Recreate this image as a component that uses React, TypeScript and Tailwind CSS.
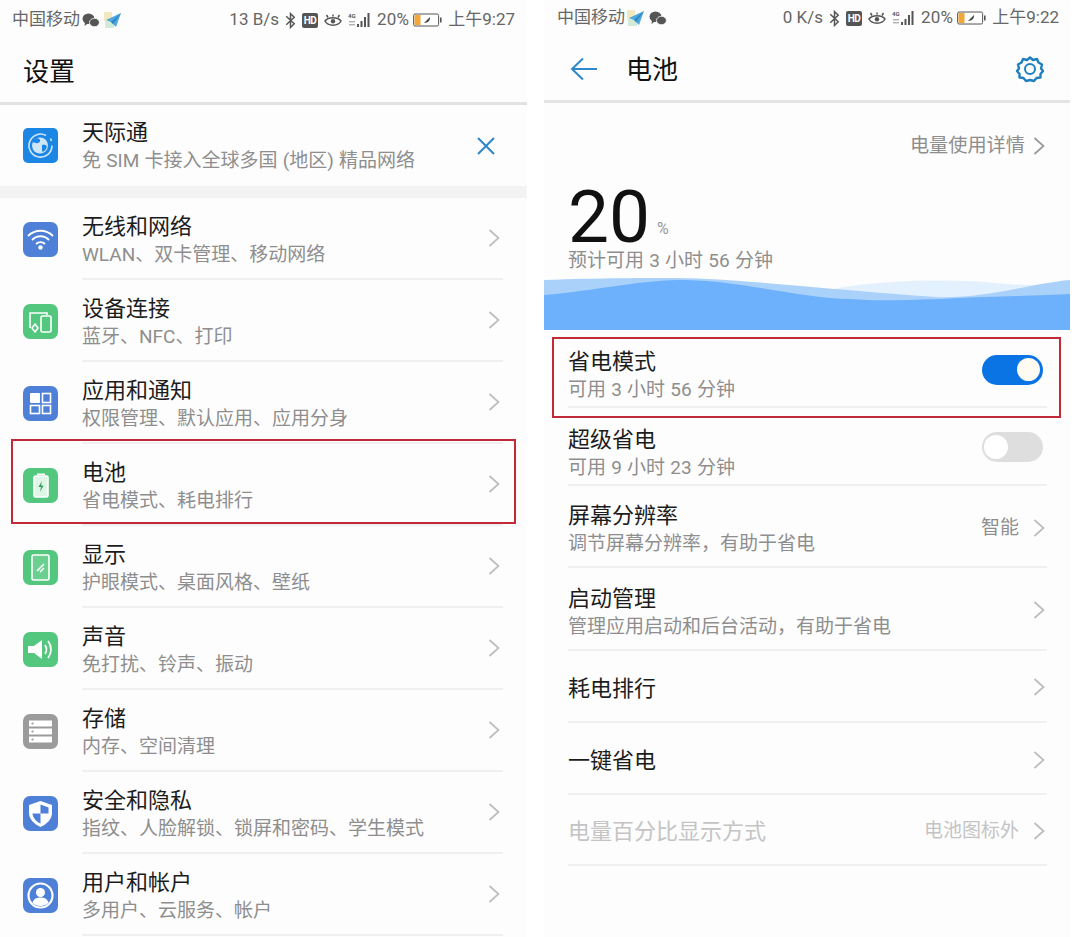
import React from "react";

const font = { fontFamily: '"Roboto","Noto Sans CJK SC",sans-serif' };

function Chevron({ className = "" }: { className?: string }) {
  return (
    <svg viewBox="0 0 12 24" className={`w-[12px] h-[24px] ${className}`} fill="none" stroke="currentColor" strokeWidth="1.7">
      <path d="M1.5 4 L10.5 12 L1.5 20" />
    </svg>
  );
}

function Wechat() {
  return (
    <svg viewBox="0 0 18 15" className="w-[18px] h-[15px]" fill="#555">
      <ellipse cx="6.5" cy="5.8" rx="6" ry="5.2" />
      <path d="M3 9.5 L2.5 13 L6.5 10 Z" />
      <ellipse cx="12.4" cy="9.5" rx="5" ry="4.2" stroke="#fff" strokeWidth="0.8" />
    </svg>
  );
}

function Plane() {
  return (
    <svg viewBox="0 0 18 16" className="w-[18px] h-[16px]">
      <rect x="0" y="0" width="8" height="9" fill="#efe3ae" opacity="0.8" />
      <rect x="1" y="9" width="9" height="7" fill="#bfe3c8" opacity="0.7" />
      <path d="M17 1 L2 8 L7 10 L12 15 Z" fill="#4ea7dd" />
      <path d="M7 10 L17 1 L9 12 Z" fill="#2f86c4" />
    </svg>
  );
}

function Bluetooth() {
  return (
    <svg viewBox="0 0 10 16" className="w-[11px] h-[17px]" fill="none" stroke="#555" strokeWidth="1.4">
      <path d="M1 4 L8.5 11 L5 14.5 V1.5 L8.5 5 L1 12" />
    </svg>
  );
}

function HdBadge() {
  return (
    <span className="w-[16px] h-[15px] rounded-[2px] bg-[#555] text-white text-[10px] leading-[15px] font-bold text-center tracking-[-0.5px]">
      HD
    </span>
  );
}

function Eye() {
  return (
    <svg viewBox="0 0 18 14" className="w-[18px] h-[15px]" fill="none" stroke="#555" strokeWidth="1.5">
      <path d="M1 7.5 C4 3 14 3 17 7.5 C14 13 4 13 1 7.5 Z" />
      <circle cx="9" cy="7.8" r="2.2" fill="#555" stroke="none" />
      <path d="M4 4 L2.5 1.5 M14 4 L15.5 1.5 M9 3 V1" />
    </svg>
  );
}

function Signal() {
  return (
    <svg viewBox="0 0 26 16" className="w-[26px] h-[16px]" fill="#555">
      <text x="0" y="6" fontSize="6" fontWeight="700" fontFamily="Roboto,sans-serif">4G</text>
      <rect x="1" y="9" width="6" height="1.4" opacity="0.45" />
      <rect x="1" y="12" width="6" height="1.4" opacity="0.45" />
      <rect x="9" y="12" width="2" height="3" />
      <rect x="12.5" y="9" width="2" height="6" />
      <rect x="16" y="5" width="2" height="10" />
      <rect x="19.5" y="1" width="2" height="14" />
    </svg>
  );
}

function Battery() {
  return (
    <svg viewBox="0 0 30 14" className="w-[30px] h-[14px]">
      <rect x="0.6" y="1" width="25" height="12" rx="1.5" fill="#fff" stroke="#555" strokeWidth="1" />
      <rect x="1.5" y="2" width="6" height="10" fill="#f0a83a" />
      <path d="M11 10 L17 4 C17.5 7 15 10 11 10 Z" fill="#444" />
      <rect x="27" y="4.5" width="1.6" height="5" fill="#555" />
    </svg>
  );
}

function StatusBar({ speed, time, wechatFirst, barClass }: { speed: string; time: string; wechatFirst: boolean; barClass: string }) {
  return (
    <div className={`h-[36px] flex items-center text-[17px] text-[#666] shrink-0 ${barClass}`}>
      <span>中国移动</span>
      <div className="flex items-center gap-[4px] ml-[2px]">
        {wechatFirst ? <Wechat /> : <Plane />}
        {wechatFirst ? <Plane /> : <Wechat />}
      </div>
      <span className="ml-auto">{speed}</span>
      <div className="flex items-center ml-[6px] gap-[6px]">
        <Bluetooth />
        <HdBadge />
        <Eye />
        <Signal />
      </div>
      <span className="ml-[3px] tracking-[0.2px]">20%</span>
      <span className="ml-[4px]"><Battery /></span>
      <span className="ml-[5px]">{time}</span>
    </div>
  );
}

function IconBox({ bg, children }: { bg: string; children: React.ReactNode }) {
  return (
    <div className={`w-[35px] h-[35px] rounded-[7px] shrink-0 ${bg}`}>
      <svg viewBox="0 0 35 35" className="w-[35px] h-[35px]" fill="none" stroke="#fff" strokeWidth="1.6">
        {children}
      </svg>
    </div>
  );
}

const items: { t: string; s: string; bg: string; icon: React.ReactNode }[] = [
  {
    t: "无线和网络", s: "WLAN、双卡管理、移动网络", bg: "bg-[#4d80d6]",
    icon: (
      <>
        <path d="M5 14 C12 7 23 7 30 14" strokeWidth="1.8" />
        <path d="M9 18 C14 13 21 13 26 18" strokeWidth="1.8" />
        <path d="M13 22 C15.5 19.5 19.5 19.5 22 22" strokeWidth="1.8" />
        <circle cx="17.5" cy="25.5" r="2.2" fill="#fff" stroke="none" />
      </>
    ),
  },
  {
    t: "设备连接", s: "蓝牙、NFC、打印", bg: "bg-[#52c77d]",
    icon: (
      <>
        <path d="M7 24 V9 H24 V11" />
        <rect x="18" y="12" width="10" height="16" rx="1.5" />
        <path d="M12 20 L15 24 L12 28 L9 24 Z" />
      </>
    ),
  },
  {
    t: "应用和通知", s: "权限管理、默认应用、应用分身", bg: "bg-[#4d80d6]",
    icon: (
      <>
        <rect x="7" y="7" width="10" height="10" rx="1" fill="#fff" stroke="none" />
        <rect x="19.5" y="7.5" width="8" height="9" />
        <rect x="7.5" y="19.5" width="9" height="8" />
        <rect x="19.5" y="19.5" width="8" height="8" />
      </>
    ),
  },
  {
    t: "电池", s: "省电模式、耗电排行", bg: "bg-[#52c77d]",
    icon: (
      <>
        <rect x="11" y="8" width="14" height="21" rx="1.5" fill="#dff5e6" stroke="#fff" />
        <rect x="14" y="5.5" width="8" height="1.6" fill="#fff" stroke="none" />
        <path d="M19 13 L15.5 19 H18 L17 24 L20.5 17.5 H18 Z" fill="#2f9e5a" stroke="none" />
      </>
    ),
  },
  {
    t: "显示", s: "护眼模式、桌面风格、壁纸", bg: "bg-[#52c77d]",
    icon: (
      <>
        <rect x="9" y="5" width="17" height="25" rx="1.5" fill="#fff" fillOpacity="0.15" />
        <path d="M14 21 L21 14 M17 22 L21 18" />
      </>
    ),
  },
  {
    t: "声音", s: "免打扰、铃声、振动", bg: "bg-[#52c77d]",
    icon: (
      <>
        <path d="M5 14 H11 L19 8 V27 L11 21 H5 Z" fill="#fff" stroke="none" />
        <path d="M22 13 C24 16 24 19 22 22" strokeWidth="1.8" />
        <path d="M25 9 C29 14 29 21 25 26" strokeWidth="1.8" />
      </>
    ),
  },
  {
    t: "存储", s: "内存、空间清理", bg: "bg-[#9b9b9b]",
    icon: (
      <>
        <rect x="6" y="6.5" width="23" height="6" fill="#fff" stroke="none" />
        <rect x="6" y="14.5" width="23" height="6" fill="#fff" stroke="none" />
        <rect x="6" y="22.5" width="23" height="6" fill="#fff" stroke="none" />
        <circle cx="9.5" cy="9.5" r="1.1" fill="#9b9b9b" stroke="none" />
        <circle cx="9.5" cy="17.5" r="1.1" fill="#9b9b9b" stroke="none" />
        <circle cx="9.5" cy="25.5" r="1.1" fill="#9b9b9b" stroke="none" />
      </>
    ),
  },
  {
    t: "安全和隐私", s: "指纹、人脸解锁、锁屏和密码、学生模式", bg: "bg-[#4d80d6]",
    icon: (
      <>
        <path d="M17.5 5 L29 9 V17 C29 23 24 28 17.5 31 C11 28 6 23 6 17 V9 Z" fill="#fff" stroke="none" />
        <path d="M17.5 8.5 L25.5 11.5 V17.5 H17.5 Z" fill="#4d80d6" stroke="none" />
        <path d="M17.5 17.5 H9.5 C10 22 13 25.5 17.5 27.5 Z" fill="#4d80d6" stroke="none" />
      </>
    ),
  },
  {
    t: "用户和帐户", s: "多用户、云服务、帐户", bg: "bg-[#4d80d6]",
    icon: (
      <>
        <circle cx="17.5" cy="17.5" r="12" strokeWidth="2.2" />
        <circle cx="17.5" cy="14.5" r="4.5" fill="#fff" stroke="none" />
        <path d="M9.5 25 C10.5 20.5 14 19.5 17.5 19.5 C21 19.5 24.5 20.5 25.5 25 C21 29 14 29 9.5 25 Z" fill="#fff" stroke="none" />
      </>
    ),
  },
];

function SettingRow({ t, s, bg, icon }: (typeof items)[number]) {
  return (
    <div className="flex items-center h-[82px] pl-[23px]">
      <IconBox bg={bg}>{icon}</IconBox>
      <div className="ml-[24px] mr-[24px] flex-1 h-full flex items-center border-b-2 border-[#f0f0f0]">
        <div className="flex-1 pt-[5px]">
          <div className="text-[22px] leading-[28px] text-[#1c1c1c]">{t}</div>
          <div className="text-[19px] leading-[28px] text-[#8e8e8e] [word-spacing:0.5px]">{s}</div>
        </div>
        <Chevron className="text-[#bdbdbd] mr-[3px]" />
      </div>
    </div>
  );
}

function Toggle({ on }: { on: boolean }) {
  return on ? (
    <div className="w-[61px] h-[30px] rounded-full bg-[#0b74e5] flex items-center justify-end pr-[3px]">
      <div className="w-[23px] h-[23px] rounded-full bg-[#fdfbf2]" />
    </div>
  ) : (
    <div className="w-[61px] h-[30px] rounded-full bg-[#dedede] flex items-center pl-[2px]">
      <div className="w-[24px] h-[24px] rounded-full bg-white" />
    </div>
  );
}

function BatteryRow({ title, sub, right, className, rightClass, disabled }: {
  title: string; sub?: string; right: React.ReactNode; className: string; rightClass: string; disabled?: boolean;
}) {
  return (
    <div className={`flex items-center border-b-2 border-[#f0f0f0] ${className}`}>
      <div className="flex-1">
        <div className={`text-[22px] leading-[28px] ${disabled ? "text-[#c4c4c4]" : "text-[#1c1c1c]"}`}>{title}</div>
        {sub && <div className="text-[19px] leading-[28px] text-[#8e8e8e] [word-spacing:0.5px]">{sub}</div>}
      </div>
      <div className={`flex items-center ${rightClass}`}>{right}</div>
    </div>
  );
}

export default function App() {
  return (
    <div className="relative flex w-[1080px] h-[937px] bg-white overflow-hidden" style={font}>
      {/* left phone */}
      <div className="w-[527px] shrink-0 bg-[#fdfdfd] flex flex-col">
        <div className="pl-[12px] pr-[12px]">
          <StatusBar speed="13 B/s" time="上午9:27" wechatFirst barClass="pt-[4px]" />
        </div>
        <div className="h-[69px] flex items-center pl-[23px] pt-[6px] border-b-[3px] border-[#e2e2e2] text-[26px] text-[#111] shrink-0">设置</div>
        <div className="h-[81px] flex items-center pl-[23px] pr-[30px] shrink-0">
          <div className="w-[35px] h-[35px] rounded-[5px] bg-[#1b86e3] shrink-0">
            <svg viewBox="0 0 35 35" className="w-[35px] h-[35px]" fill="none" stroke="#cfe6fa" strokeWidth="1.6">
              <path d="M29 17.5 A11.5 11.5 0 1 1 23 7.5" />
              <path d="M27.5 10.5 L28.5 13" />
              <circle cx="17" cy="17.5" r="8" fill="#cfe6fa" stroke="none" />
              <path d="M14 10 C18 11 18 14 15 15 C12 16 11 13 10 15 L10 12 Z M19 17 C23 16 25 18 23 21 C21 24 19 25 19 22 Z" fill="#1b86e3" stroke="none" />
            </svg>
          </div>
          <div className="ml-[24px] flex-1 pt-[3px]">
            <div className="text-[22px] leading-[28px] text-[#1c1c1c]">天际通</div>
            <div className="text-[19px] leading-[28px] text-[#8e8e8e] [word-spacing:0.5px]">免 SIM 卡接入全球多国 (地区) 精品网络</div>
          </div>
          <svg viewBox="0 0 20 20" className="w-[20px] h-[20px] -translate-x-[1px]" fill="none" stroke="#2f84c6" strokeWidth="2">
            <path d="M2 2 L18 18 M18 2 L2 18" />
          </svg>
        </div>
        <div className="h-[12px] bg-[#f3f3f3] shrink-0" />
        {items.map((it) => (
          <SettingRow key={it.t} {...it} />
        ))}
      </div>

      {/* right phone */}
      <div className="ml-[17px] w-[526px] shrink-0 bg-[#fdfdfd] flex flex-col">
        <div className="pl-[13px] pr-[11px]">
          <StatusBar speed="0 K/s" time="上午9:22" wechatFirst={false} barClass="" />
        </div>
        <div className="h-[67px] flex items-center pl-[26px] pr-[25px] pt-[2px] border-b-[3px] border-[#e4e4e4] shrink-0">
          <svg viewBox="0 0 28 24" className="w-[28px] h-[24px]" fill="none" stroke="#2f88c9" strokeWidth="2">
            <path d="M13 1.5 L2 12 L13 22.5 M2 12 H27" />
          </svg>
          <span className="ml-[28px] mt-[2px] text-[26px] text-[#111]">电池</span>
          <svg viewBox="0 0 30 30" className="ml-auto w-[30px] h-[30px]" fill="none" stroke="#1f7fbf" strokeWidth="2.4">
            <path d="M15 3.5 L18 6 L22 5 L23.5 8.5 L27 10.5 L26 14.5 L28 17 L25.5 20 L25.5 23.5 L21.5 24 L19 27 L15 26 L11 27 L8.5 24 L4.5 23.5 L4.5 20 L2 17 L4 14.5 L3 10.5 L6.5 8.5 L8 5 L12 6 Z" strokeLinejoin="round" />
            <circle cx="15" cy="15" r="5" strokeWidth="2" />
          </svg>
        </div>
        <div className="h-[84px] flex items-center justify-end pr-[25px] pt-[2px] text-[19.2px] text-[#8e8e8e] shrink-0">
          <span>电量使用详情</span>
          <Chevron className="ml-[8px] text-[#999]" />
        </div>
        <div className="pl-[24px] h-[60px] flex items-end shrink-0">
          <span className="text-[73px] leading-[60px] text-[#111]" style={{ fontFamily: "Roboto,sans-serif" }}>20</span>
          <span className="ml-[7px] text-[16px] text-[#999] leading-[20px] mb-[8px]">%</span>
        </div>
        <div className="pl-[24px] h-[26px] mt-[1px] text-[19px] leading-[26px] text-[#8e8e8e] [word-spacing:0.5px] shrink-0">预计可用 3 小时 56 分钟</div>
        <svg viewBox="0 0 526 55" preserveAspectRatio="none" className="w-[526px] h-[55px] shrink-0 mt-[1px]">
          <path d="M290 14 C330 6 400 3 450 8 C480 11 500 10 526 8 V30 H290 Z" fill="#e3f0fd" />
          <path d="M0 5 C60 3 100 3 134 3 C200 4 300 16 392 22 C440 24 490 8 526 5 V30 H0 Z" fill="#a9d1fa" />
          <path d="M0 20 C50 16 90 6 134 5 C190 4 260 24 306 24 C340 27 392 24 440 22 C480 21 510 20 526 19 V55 H0 Z" fill="#6db0fb" />
        </svg>
        <div className="pl-[24px] pr-[23px] flex flex-col">
          <BatteryRow title="省电模式" sub="可用 3 小时 56 分钟" className="h-[78px] pt-[15px]" rightClass="mr-[4px] mb-[12px]" right={<Toggle on />} />
          <BatteryRow title="超级省电" sub="可用 9 小时 23 分钟" className="h-[78px] pt-[16px]" rightClass="mr-[4px] mb-[14px]" right={<Toggle on={false} />} />
          <BatteryRow
            title="屏幕分辨率" sub="调节屏幕分辨率，有助于省电" className="h-[82px] pt-[8px]" rightClass="mr-[2px] mb-[4px]"
            right={<><span className="text-[19px] text-[#8e8e8e]">智能</span><Chevron className="ml-[14px] text-[#bdbdbd]" /></>}
          />
          <BatteryRow title="启动管理" sub="管理应用启动和后台活动，有助于省电" className="h-[83px] pt-[9px]" rightClass="mr-[2px] mb-[6px]" right={<Chevron className="text-[#bdbdbd]" />} />
          <BatteryRow title="耗电排行" className="h-[72px] pt-[6px]" rightClass="mr-[2px] mb-[4px]" right={<Chevron className="text-[#bdbdbd]" />} />
          <BatteryRow title="一键省电" className="h-[72px] pt-[6px]" rightClass="mr-[2px] mb-[2px]" right={<Chevron className="text-[#bdbdbd]" />} />
          <BatteryRow
            title="电量百分比显示方式" disabled className="h-[71px] pt-[5px]" rightClass="mr-[2px] mb-[2px]"
            right={<><span className="text-[19px] text-[#c4c4c4]">电池图标外</span><Chevron className="ml-[14px] text-[#bdbdbd]" /></>}
          />
        </div>
      </div>

      {/* red annotation boxes */}
      <div className="absolute left-[11px] top-[439px] w-[505px] h-[85px] border-2 border-[#c22a38]" />
      <div className="absolute left-[552px] top-[337px] w-[509px] h-[81px] border-2 border-[#c22a38]" />
    </div>
  );
}
